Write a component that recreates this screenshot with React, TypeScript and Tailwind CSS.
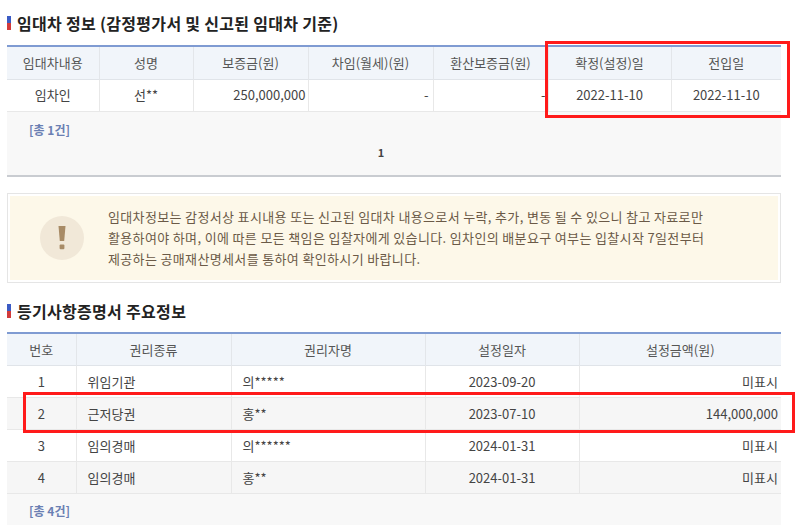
import React from "react";

const F = { fontFamily: '"Noto Sans CJK KR","Noto Sans",sans-serif' };

function Title({ children }: { children: React.ReactNode }) {
  return (
    <div className="flex items-center gap-[6px] h-[24px]">
      <div className="flex flex-col w-[4px]">
        <div className="h-[7px] bg-[#3b5bc4]" />
        <div className="h-[7px] bg-[#d23a3a]" />
      </div>
      <div className="text-[16px] font-bold text-[#222] tracking-[0.3px]">{children}</div>
    </div>
  );
}

export default function App() {
  const th = "border-r border-[#e3e6ea] last:border-r-0 font-normal text-[#555] text-[13px]";
  const td = "border-r border-[#e8e8e8] last:border-r-0 text-[13px] text-[#444]";
  const bottomRows = [
    ["1", "위임기관", "의*****", "2023-09-20", "미표시"],
    ["2", "근저당권", "홍**", "2023-07-10", "144,000,000"],
    ["3", "임의경매", "의******", "2024-01-31", "미표시"],
    ["4", "임의경매", "홍**", "2024-01-31", "미표시"],
  ];
  return (
    <div style={F} className="relative w-[800px] h-[525px] bg-white overflow-hidden px-[7px] pr-[19px] pt-[11px]">
      <Title>임대차 정보 (감정평가서 및 신고된 임대차 기준)</Title>
      <div className="mt-[10px] border-t-2 border-[#7f9bd2]">
        <table className="w-full border-collapse table-fixed">
          <colgroup>
            <col className="w-[92px]" /><col className="w-[94px]" /><col className="w-[115px]" /><col className="w-[125px]" /><col className="w-[115px]" /><col className="w-[123px]" /><col />
          </colgroup>
          <thead>
            <tr className="h-[32px] bg-[#f1f5fa] border-b border-[#e0e4e9]">
              {["임대차내용", "성명", "보증금(원)", "차임(월세)(원)", "환산보증금(원)", "확정(설정)일", "전입일"].map(h => (
                <th key={h} className={th}>{h}</th>
              ))}
            </tr>
          </thead>
          <tbody>
            <tr className="h-[32px] border-b border-[#e8e8e8]">
              <td className={td + " text-center"}>임차인</td>
              <td className={td + " text-center"}>선**</td>
              <td className={td + " text-right pr-[2px]"}>250,000,000</td>
              <td className={td + " text-right pr-[4px]"}>-</td>
              <td className={td + " text-right pr-[2px]"}>-</td>
              <td className={td + " text-center"}>2022-11-10</td>
              <td className={td + " text-center"}>2022-11-10</td>
            </tr>
          </tbody>
        </table>
        <div className="h-[65px] bg-[#f8f8f8] border-b-2 border-[#c9ccd1] relative">
          <div className="pl-[22px] pt-[9px] text-[12px] font-bold text-[#6a7fb3]">[총 1건]</div>
          <div className="text-center text-[11px] font-bold text-[#444] mt-[5px] pr-[26px]">1</div>
        </div>
      </div>

      <div className="mt-[16px] border border-[#e5e5e5] p-[2px] h-[90px]">
        <div className="h-full bg-[#fdf8e9] flex items-center">
          <div className="ml-[30px] w-[44px] h-[44px] rounded-full bg-[#f1e8d8] flex items-center justify-center shrink-0">
            <svg width="10" height="26" viewBox="0 0 10 26">
              <path d="M1.5 1 h7 l-1.3 15 h-4.4 z" fill="#a88b66" />
              <rect x="2.6" y="19.5" width="4.8" height="4.8" rx="1" fill="#a88b66" />
            </svg>
          </div>
          <div className="ml-[24px] text-[13px] leading-[21px] tracking-[0.35px] text-[#6b5a47]">
            임대차정보는 감정서상 표시내용 또는 신고된 임대차 내용으로서 누락, 추가, 변동 될 수 있으니 참고 자료로만<br />
            활용하여야 하며, 이에 따른 모든 책임은 입찰자에게 있습니다. 임차인의 배분요구 여부는 입찰시작 7일전부터<br />
            제공하는 공매재산명세서를 통하여 확인하시기 바랍니다.
          </div>
        </div>
      </div>

      <div className="mt-[16px]"><Title>등기사항증명서 주요정보</Title></div>
      <div className="mt-[9px] border-t-2 border-[#7f9bd2]">
        <table className="w-full border-collapse table-fixed">
          <colgroup>
            <col className="w-[69px]" /><col className="w-[155px]" /><col className="w-[194px]" /><col className="w-[154px]" /><col />
          </colgroup>
          <thead>
            <tr className="h-[32px] bg-[#f1f5fa] border-b border-[#e0e4e9]">
              {["번호", "권리종류", "권리자명", "설정일자", "설정금액(원)"].map(h => (
                <th key={h} className={th}>{h}</th>
              ))}
            </tr>
          </thead>
          <tbody>
            {bottomRows.map((r, i) => (
              <tr key={i} className={"h-[32px] border-b border-[#e8e8e8] " + (i % 2 === 1 ? "bg-[#f6f6f6]" : "bg-white")}>
                <td className={td + " text-center"}>{r[0]}</td>
                <td className={td + " pl-[11px]"}>{r[1]}</td>
                <td className={td + " pl-[11px]"}>{r[2]}</td>
                <td className={td + " text-center"}>{r[3]}</td>
                <td className={td + " text-right pr-[3px]"}>{r[4]}</td>
              </tr>
            ))}
          </tbody>
        </table>
        <div className="h-[40px] bg-[#f8f8f8]">
          <div className="pl-[22px] pt-[8px] text-[12px] font-bold text-[#6a7fb3]">[총 4건]</div>
        </div>
      </div>

      <div className="absolute left-[545px] top-[41px] w-[245px] h-[77px] border-[3px] border-[#ff1a1a]" />
      <div className="absolute left-[23px] top-[392px] w-[772px] h-[41px] border-[3px] border-[#ff1a1a]" />
    </div>
  );
}
